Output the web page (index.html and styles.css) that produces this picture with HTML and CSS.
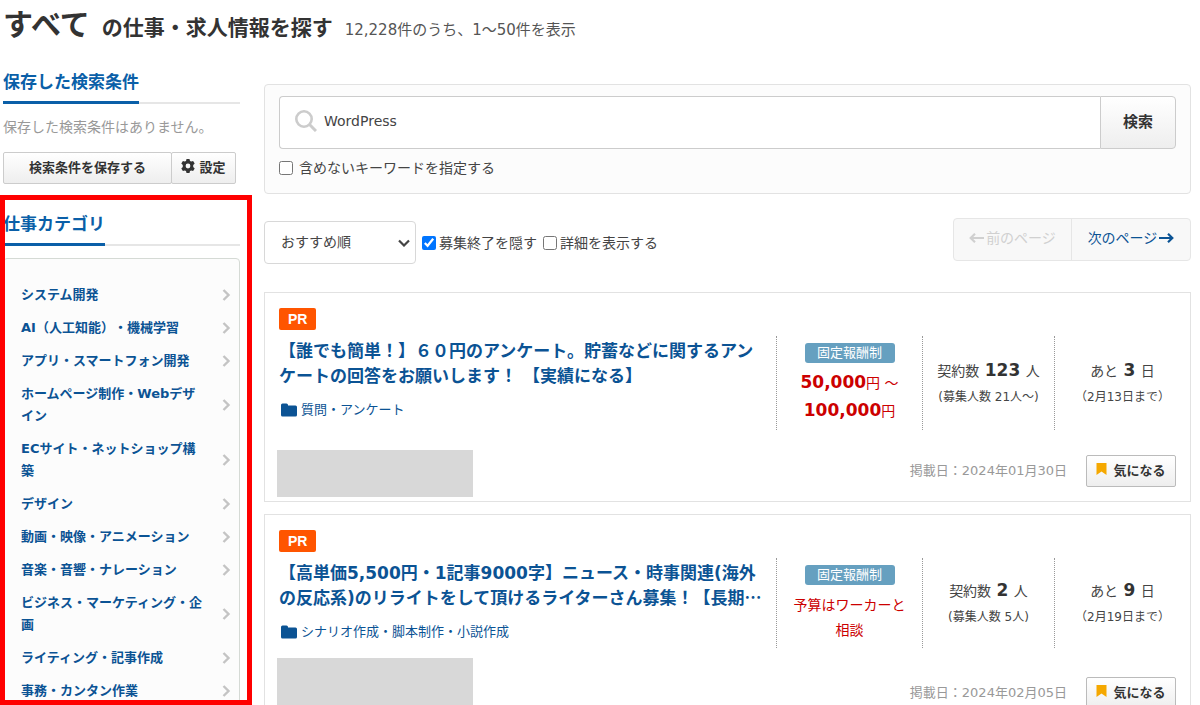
FILE: index.html
```html
<!DOCTYPE html>
<html lang="ja">
<head>
<meta charset="utf-8">
<meta name="viewport" content="width=device-width, initial-scale=1">
<title>仕事・求人情報を探す</title>
<link rel="stylesheet" href="styles.css">
</head>
<body>
<svg class="sprite" aria-hidden="true">
  <symbol id="chevron" viewBox="0 0 10 12"><path d="M2.5 1L7.5 6L2.5 11" fill="none" stroke="currentColor" stroke-width="2.4"/></symbol>
  <symbol id="folder" viewBox="0 0 16 14"><path d="M0 2Q0 .5 1.500 .5H5.500Q7 .5 7 2V2.500H14.500Q16 2.500 16 4V12Q16 13.500 14.500 13.500H1.500Q0 13.500 0 12Z" fill="currentColor"/></symbol>
  <symbol id="bookmark" viewBox="0 0 11 12"><path d="M.5 0H10.500V12L5.500 8.500L.5 12Z" fill="currentColor"/></symbol>
  <symbol id="arrow" viewBox="0 0 15 12"><path d="M0 6H13M9 1.800L13.300 6L9 10.200" fill="none" stroke="currentColor" stroke-width="2.2"/></symbol>
</svg>
<div class="page">
  <header class="page-head">
    <h1 class="title"><span class="title-scope">すべて</span>の仕事・求人情報を探す</h1>
    <p class="result-count">12,228件のうち、1〜50件を表示</p>
  </header>
  <div class="columns">
    <aside class="sidebar">
      <section class="saved">
        <div class="side-head"><h2 class="side-title">保存した検索条件</h2></div>
        <p class="saved-empty">保存した検索条件はありません。</p>
        <div class="saved-actions">
          <button type="button" class="btn btn-save">検索条件を保存する</button>
          <button type="button" class="btn btn-config">
            <svg class="icon-gear" viewBox="0 0 14 14" aria-hidden="true"><path fill-rule="evenodd" fill="currentColor" d="M5.500 0H8.500L9 2L10.200 2.600L12.100 1.900L13.700 4.600L12.200 6V8L13.700 9.400L12.100 12.100L10.200 11.400L9 12L8.500 14H5.500L5 12L3.800 11.400L1.900 12.100L.3 9.400L1.800 8V6L.3 4.600L1.900 1.900L3.800 2.600L5 2ZM7 4.600A2.400 2.400 0 1 0 7 9.400A2.400 2.400 0 1 0 7 4.600Z"/></svg>設定
          </button>
        </div>
      </section>
      <section class="categories">
        <div class="side-head"><h2 class="side-title">仕事カテゴリ</h2></div>
        <ul class="cat-list">
          <li><a class="cat" href="#">システム開発<svg class="chevron"><use href="#chevron"/></svg></a></li>
          <li><a class="cat" href="#">AI（人工知能）・機械学習<svg class="chevron"><use href="#chevron"/></svg></a></li>
          <li><a class="cat" href="#">アプリ・スマートフォン開発<svg class="chevron"><use href="#chevron"/></svg></a></li>
          <li><a class="cat" href="#">ホームページ制作・Webデザイン<svg class="chevron"><use href="#chevron"/></svg></a></li>
          <li><a class="cat" href="#">ECサイト・ネットショップ構築<svg class="chevron"><use href="#chevron"/></svg></a></li>
          <li><a class="cat" href="#">デザイン<svg class="chevron"><use href="#chevron"/></svg></a></li>
          <li><a class="cat" href="#">動画・映像・アニメーション<svg class="chevron"><use href="#chevron"/></svg></a></li>
          <li><a class="cat" href="#">音楽・音響・ナレーション<svg class="chevron"><use href="#chevron"/></svg></a></li>
          <li><a class="cat" href="#">ビジネス・マーケティング・企画<svg class="chevron"><use href="#chevron"/></svg></a></li>
          <li><a class="cat" href="#">ライティング・記事作成<svg class="chevron"><use href="#chevron"/></svg></a></li>
          <li><a class="cat" href="#">事務・カンタン作業<svg class="chevron"><use href="#chevron"/></svg></a></li>
        </ul>
      </section>
    </aside>
    <main class="main">
      <form class="search">
        <div class="search-row">
          <label class="search-box">
            <svg class="icon-search" viewBox="0 0 22 22" aria-hidden="true"><circle cx="9" cy="9" r="7.700" fill="none" stroke="currentColor" stroke-width="2.600"/><path d="M14.500 14.500L21 21" stroke="currentColor" stroke-width="3"/></svg>
            <input class="search-input" type="text" value="WordPress" aria-label="キーワード">
          </label>
          <button type="button" class="btn btn-search">検索</button>
        </div>
        <label class="check check-exclude"><input type="checkbox">含めないキーワードを指定する</label>
      </form>
      <div class="toolbar">
        <div class="filters">
          <div class="sort">
            <select class="sort-select" aria-label="並び順"><option>おすすめ順</option></select>
            <svg class="sort-arrow" viewBox="0 0 12 8" aria-hidden="true"><path d="M1 1.500L6 6.500L11 1.500" fill="none" stroke="currentColor" stroke-width="2.200"/></svg>
          </div>
          <label class="check"><input type="checkbox" checked>募集終了を隠す</label>
          <label class="check"><input type="checkbox">詳細を表示する</label>
        </div>
        <nav class="pager">
          <span class="pager-item pager-off"><svg class="arrow arrow-back"><use href="#arrow"/></svg>前のページ</span>
          <a class="pager-item" href="#">次のページ<svg class="arrow"><use href="#arrow"/></svg></a>
        </nav>
      </div>
      <article class="job">
        <div class="job-main">
          <span class="pr">PR</span>
          <h3 class="job-title"><a href="#">【誰でも簡単！】６０円のアンケート。貯蓄などに関するアン<br>ケートの回答をお願いします！ 【実績になる】</a></h3>
          <a class="job-cat" href="#"><svg class="folder"><use href="#folder"/></svg>質問・アンケート</a>
          <div class="client"></div>
        </div>
        <div class="stat stat-pay">
          <span class="pay-type">固定報酬制</span>
          <p class="price"><b>50,000</b>円 〜<br><b>100,000</b>円</p>
        </div>
        <div class="stat">
          <p class="stat-line">契約数 <b>123</b> 人</p>
          <p class="stat-note">(募集人数 21人〜)</p>
        </div>
        <div class="stat">
          <p class="stat-line">あと <b>3</b> 日</p>
          <p class="stat-note">（2月13日まで）</p>
        </div>
        <div class="job-foot">
          <span class="posted">掲載日：2024年01月30日</span>
          <button type="button" class="btn btn-keep"><svg class="bookmark"><use href="#bookmark"/></svg>気になる</button>
        </div>
      </article>
      <article class="job">
        <div class="job-main">
          <span class="pr">PR</span>
          <h3 class="job-title"><a href="#">【高単価5,500円・1記事9000字】ニュース・時事関連(海外<br>の反応系)のリライトをして頂けるライターさん募集！【長期<span class="ellipsis">…</span></a></h3>
          <a class="job-cat" href="#"><svg class="folder"><use href="#folder"/></svg>シナリオ作成・脚本制作・小説作成</a>
          <div class="client client-tall"></div>
        </div>
        <div class="stat stat-pay">
          <span class="pay-type">固定報酬制</span>
          <p class="price price-open">予算はワーカーと<br>相談</p>
        </div>
        <div class="stat">
          <p class="stat-line">契約数 <b>2</b> 人</p>
          <p class="stat-note">(募集人数 5人)</p>
        </div>
        <div class="stat">
          <p class="stat-line">あと <b>9</b> 日</p>
          <p class="stat-note">（2月19日まで）</p>
        </div>
        <div class="job-foot">
          <span class="posted">掲載日：2024年02月05日</span>
          <button type="button" class="btn btn-keep"><svg class="bookmark"><use href="#bookmark"/></svg>気になる</button>
        </div>
      </article>
    </main>
  </div>
</div>
</body>
</html>
```
FILE: styles.css
```css
* { box-sizing: border-box; }
body, h1, h2, h3, p, ul { margin: 0; padding: 0; }
ul { list-style: none; }
body, button, input, select {
  font-family: "DejaVu Sans", "Noto Sans CJK JP", sans-serif;
  font-size: 14px;
  color: #444;
}
body { background: #fff; line-height: 22px; text-spacing-trim: space-all; }
a { color: #0b5394; text-decoration: none; }
.sprite { position: absolute; width: 0; height: 0; }

.page {
  display: flex;
  flex-direction: column;
  height: 100vh;
  overflow: hidden;
}
.page-head {
  display: flex;
  align-items: baseline;
  gap: 12px;
  padding: 5px 3px 0;
  height: 60px;
  white-space: nowrap;
}
.title { font-size: 21px; line-height: 40px; color: #333; }
.title-scope { font-size: 30px; margin-right: 12px; }
.result-count { font-size: 15px; color: #555; }

.columns { display: flex; flex: 1; gap: 12px; min-height: 0; }
.sidebar { display: flex; flex-direction: column; flex: 0 0 252px; }
.main { flex: 1; min-width: 0; padding: 24px 9px 0 0; }

.saved { height: 135px; padding: 9px 12px 0 3px; }
.side-head { display: flex; border-bottom: 2px solid #e6e6e6; }
.side-title {
  margin-bottom: -2px;
  padding-bottom: 6px;
  border-bottom: 3px solid #0a5fa8;
  font-size: 17px;
  line-height: 26px;
  color: #0a5fa8;
}
.saved-empty { margin-top: 12px; color: #999; }
.saved-actions { display: flex; margin-top: 14px; }

.btn {
  display: inline-flex;
  align-items: center;
  justify-content: center;
  height: 32px;
  padding: 0 0 4px;
  border: 1px solid #ccc;
  border-radius: 2px;
  background: linear-gradient(#fff, #eee);
  font-size: 13px;
  font-weight: bold;
  color: #333;
}
.btn-save { width: 169px; }
.btn-config { width: 65px; margin-left: -1px; gap: 4px; }
.icon-gear { width: 14px; height: 14px; }

.categories {
  position: relative;
  flex: 1;
  min-height: 0;
  overflow: hidden;
  padding: 16px 12px 0 3px;
}
/* Highlight frame over the category block */
.categories::after {
  content: "";
  position: absolute;
  inset: 0;
  border: 5px solid #f00;
  pointer-events: none;
}
.cat-list {
  margin-top: 12px;
  padding: 20px 8px 16px 17px;
  border: 1px solid #d5dad5;
  border-radius: 4px;
  background: #fcfcfc;
}
.cat {
  display: flex;
  align-items: center;
  justify-content: space-between;
  gap: 16px;
  padding: 5px 0 6px;
  font-size: 13px;
  font-weight: bold;
}
.chevron { flex: none; width: 10px; height: 12px; color: #c4c4c4; }

.search {
  padding: 11px 14px 14px;
  border: 1px solid #e2e2e2;
  border-radius: 4px;
  background: #fcfcfc;
}
.search-row { display: flex; }
.search-box {
  display: flex;
  flex: 1;
  align-items: center;
  gap: 7px;
  height: 53px;
  padding: 0 0 4px 15px;
  border: 1px solid #ccc;
  border-right: 0;
  border-radius: 4px 0 0 4px;
  background: #fff;
}
.icon-search { width: 22px; height: 22px; color: #ccc; }
.search-input { flex: 1; height: 46px; padding: 0; border: 0; outline: 0; background: none; }
.btn-search { width: 76px; height: 53px; border-radius: 0 4px 4px 0; font-size: 15px; }
.check { display: flex; align-items: center; gap: 3px; }
.check input { width: 14px; height: 14px; margin: 0; }
.check-exclude { gap: 6px; margin-top: 8px; }

.toolbar { display: flex; justify-content: space-between; margin-top: 24px; }
.filters { display: flex; align-items: center; gap: 6px; padding-top: 3px; }
.sort { display: grid; align-items: center; width: 152px; }
.sort-select {
  grid-area: 1 / 1;
  appearance: none;
  height: 43px;
  padding: 0 16px 2px;
  border: 1px solid #d8d8d8;
  border-radius: 4px;
  background: #fff;
}
.sort-arrow { grid-area: 1 / 1; justify-self: end; width: 12px; height: 8px; margin-right: 6px; pointer-events: none; }
.pager { display: flex; height: 43px; border: 1px solid #e6e6e6; border-radius: 4px; background: #f8f8f8; }
.pager-item { display: flex; align-items: center; justify-content: center; gap: 2px; width: 118px; padding-bottom: 3px; }
.pager-off { border-right: 1px solid #e6e6e6; color: #d0d0d0; }
.arrow { width: 15px; height: 12px; }
.arrow-back { transform: rotate(180deg); }

.job {
  display: grid;
  grid-template-columns: minmax(0, 1fr) 146px 132px 136px;
  grid-template-rows: auto 1fr;
  height: 210px;
  border: 1px solid #e2e2e2;
}
.toolbar + .job { margin-top: 28px; }
.job + .job { margin-top: 12px; }
.job-main {
  grid-row: 1 / 3;
  display: flex;
  flex-direction: column;
  align-items: flex-start;
  padding: 15px 0 4px 14px;
}
.pr {
  padding: 0 9px;
  border-radius: 2px;
  background: #ff5500;
  font-family: "Liberation Sans", sans-serif;
  font-size: 14px;
  font-weight: bold;
  color: #fff;
}
.job-title { margin-top: 9px; font-size: 17px; line-height: 25px; white-space: nowrap; }
.ellipsis { font-family: "Noto Sans CJK JP", sans-serif; line-height: 1; }
.job-cat { display: flex; align-items: center; gap: 4px; margin: 10px 0 0 2px; font-size: 13px; }
.folder { width: 16px; height: 14px; }
.client { width: 196px; height: 47px; margin: auto 0 0 -2px; background: #d8d8d8; }
.client-tall { height: 61px; }

.stat {
  display: flex;
  flex-direction: column;
  justify-content: center;
  margin-top: 43px;
  padding-top: 2px;
  border-left: 1px dotted #999;
  text-align: center;
  white-space: nowrap;
}
.stat-pay { align-items: center; justify-content: flex-start; padding: 7px 0 5px; }
.pay-type {
  width: 90px;
  border-radius: 3px;
  background: #66a0c0;
  font-size: 13px;
  line-height: 20px;
  color: #fff;
}
.price { margin-top: 6px; line-height: 28px; color: #c00; }
.price b { font-size: 17px; line-height: 1; }
.price-open { margin-top: 8px; line-height: 25px; }
.stat-line { line-height: 26px; }
.stat-line b { margin: 0 1px; font-size: 17px; line-height: 1; color: #333; }
.stat-note { font-size: 12px; line-height: 26px; }

.job-foot {
  grid-column: 2 / 5;
  display: flex;
  align-items: flex-end;
  justify-content: flex-end;
  gap: 19px;
  padding: 0 14px 14px 0;
}
.posted { font-size: 13px; line-height: 32px; color: #999; }
.btn-keep { width: 90px; gap: 6px; border-color: #bbb; }
.bookmark { width: 11px; height: 12px; color: #f5a800; }
```
